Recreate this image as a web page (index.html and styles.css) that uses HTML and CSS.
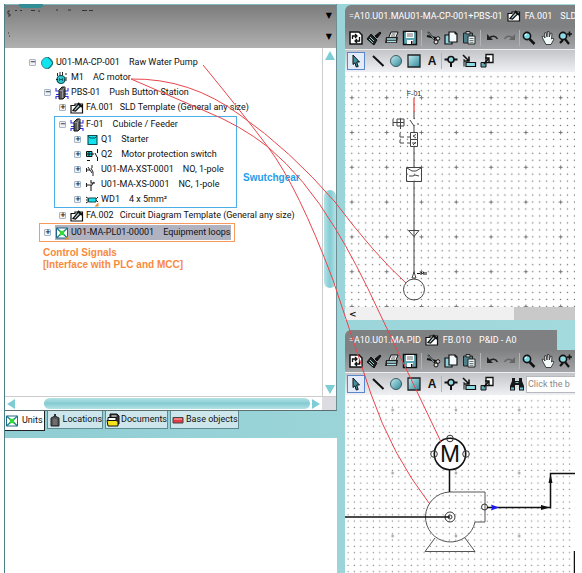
FILE: index.html
```html
<!DOCTYPE html>
<html lang="en">
<head>
<meta charset="utf-8">
<title>Units</title>
<link rel="stylesheet" href="styles.css">
</head>
<body>
<svg class="sprite" aria-hidden="true">
  <defs>
    <linearGradient id="teal" x1="0" y1="0" x2="1" y2="1"><stop offset="0" stop-color="#c4eef3"/><stop offset="1" stop-color="#2d8797"/></linearGradient>
    <symbol id="i-refresh" viewBox="0 0 16 16"><path d="M2 2h9l3 3v9H2z" fill="#fff" stroke="#111" stroke-width="1.5"/><path d="M4.500 9V6h4M7 4l2 2-2 2M11.500 7v4h-4M9 9l-2 2 2 2" fill="none" stroke="#111" stroke-width="1.300"/></symbol>
    <symbol id="i-brush" viewBox="0 0 16 16"><path d="M9 6l5-4 1 1-4 5z" fill="#111" stroke="#111"/><path d="M5 4l6 6-3 5-7-6z" fill="#222" stroke="#111"/><path d="M4 7l4 4M3 9l4 4" stroke="#8cd0da"/></symbol>
    <symbol id="i-print" viewBox="0 0 16 16"><path d="M5 7l2-5h7l-2 5" fill="#fff" stroke="#111"/><path d="M2 7h12l-1 6H1z" fill="#222"/><path d="M3 9h9M3 11.500h9" stroke="#a6dfe6" stroke-width="1.500"/><path d="M7.500 4h4M7 6h4" stroke="#111" stroke-width=".7"/></symbol>
    <symbol id="i-save" viewBox="0 0 16 16"><path d="M1.500 1.500h13v13h-13z" fill="#5aa6b2" stroke="#111" stroke-width="1.400"/><path d="M4 2h8v6H4zM5 10h6v4H5z" fill="#fff"/><path d="M5 4h6M5 6h6" stroke="#444" stroke-width=".8"/><path d="M9 11h1.500v3H9z" fill="#111"/></symbol>
    <symbol id="i-cut" viewBox="0 0 16 16"><path d="M3 2l7 8M2 6l9 2" stroke="#111" stroke-width="1.800"/><path d="M3.300 2.500L9 9" stroke="#cfeef2" stroke-width=".7"/><circle cx="13" cy="8.500" r="1.800" fill="#ddd" stroke="#111"/><circle cx="11" cy="12" r="2" fill="#ddd" stroke="#111"/></symbol>
    <symbol id="i-copy" viewBox="0 0 16 16"><path d="M2 5h7v9H2z" fill="#8ed3dd" stroke="#111" stroke-width="1.200"/><path d="M6 2h6l2 2v8H6z" fill="#f4fbfc" stroke="#111" stroke-width="1.200"/><path d="M12 2v2h2" fill="none" stroke="#111"/></symbol>
    <symbol id="i-paste" viewBox="0 0 16 16"><path d="M2.500 3h9v10h-9z" fill="#4c7f88" stroke="#222"/><path d="M5 1.500h4V4H5z" fill="#ccc" stroke="#222"/><path d="M7 6h7v8H7z" fill="#e6f5f7" stroke="#222"/><path d="M8.500 8.500h4M8.500 10.500h4M8.500 12.300h4" stroke="#444" stroke-width=".7"/></symbol>
    <symbol id="i-undo" viewBox="0 0 16 16"><path d="M3 4v6h6z" fill="#222"/><path d="M5 8.500C8 5 12 6 13.500 9" fill="none" stroke="#222" stroke-width="1.500"/></symbol>
    <symbol id="i-redo" viewBox="0 0 16 16"><path d="M13 4v6H7z" fill="#666"/><path d="M11 8.500C8 5 4 6 2.500 9" fill="none" stroke="#666" stroke-width="1.500"/></symbol>
    <symbol id="i-zoom" viewBox="0 0 16 16"><path d="M8.500 9l5 5" stroke="#111" stroke-width="2.500"/><circle cx="6" cy="6" r="3.600" fill="#7cd8e4" stroke="#111" stroke-width="1.600"/><path d="M4 6q0-2 2-2" stroke="#fff" fill="none"/></symbol>
    <symbol id="i-hand" viewBox="0 0 16 16"><path d="M4 9L3 6.500 4.500 6 6 8 5.500 3 7 2.500 8 7l.5-5.500H10l.3 5.500 1.200-4 1.500.5L12.500 9l1.500-1 1 1-3 5.500H7z" fill="#f2fafa" stroke="#222" stroke-width=".8"/></symbol>
    <symbol id="i-zoomx" viewBox="0 0 16 16"><path d="M8 9l4 5M3 13l3-3" stroke="#111" stroke-width="2.200"/><circle cx="6" cy="6" r="3.600" fill="#8edbe6" stroke="#111" stroke-width="1.600"/><path d="M10 4h5M12.500 1.500v5" stroke="#111" stroke-width="1.600"/></symbol>
    <symbol id="i-page" viewBox="0 0 16 16"><path d="M2 1h13v14H2z" fill="#fff" stroke="#111" stroke-width="2"/></symbol>
    <symbol id="i-arrow" viewBox="0 0 16 16"><path d="M5 2l6.500 7H8.700l1.500 4.500-2 .5L7 9.800 5 11.500z" fill="#3d93a0" stroke="#111"/></symbol>
    <symbol id="i-line" viewBox="0 0 16 16"><path d="M3 3l10.500 10" stroke="#111" stroke-width="2"/></symbol>
    <symbol id="i-circle" viewBox="0 0 16 16"><circle cx="8" cy="8" r="5.500" fill="url(#teal)" stroke="#3c5a60"/></symbol>
    <symbol id="i-rect" viewBox="0 0 16 16"><path d="M2 2h12v12H2z" fill="url(#teal)" stroke="#222" stroke-width="1.300"/></symbol>
    <symbol id="i-node" viewBox="0 0 16 16"><path d="M1.500 6.500h13M8 7v7" stroke="#111" stroke-width="2"/><circle cx="8" cy="6.500" r="3" fill="#8fdbe4" stroke="#111" stroke-width="1.600"/></symbol>
    <symbol id="i-insert" viewBox="0 0 16 16"><path d="M2 2l6 6M8 3.500V8H3" stroke="#111" stroke-width="1.600" fill="none"/><path d="M3 6v7.500" stroke="#111"/><path d="M5 9.500h9.500v4H5z" fill="#8fdbe4" stroke="#111" stroke-width="1.200"/></symbol>
    <symbol id="i-move" viewBox="0 0 16 16"><path d="M7 1.500h7v8H7z" fill="#fff" stroke="#111" stroke-width="1.300"/><path d="M2 9.500h5v4.500H2z" fill="#62a9b4" stroke="#111"/><path d="M5 11l5-6M10 9V5H6" stroke="#111" stroke-width="1.400" fill="none"/></symbol>
    <symbol id="i-find" viewBox="0 0 16 16"><path d="M3 2h3v3h4V2h3v3l2 5v4.500h-5V9H6v5.500H1V10l2-5z" fill="#14181a"/><path d="M2 11.500h3v2H2zM11 11.500h3v2h-3z" fill="#67c3cf"/><path d="M6.500 6.500h3" stroke="#67c3cf"/></symbol>
    <symbol id="i-doc" viewBox="0 0 14 12"><path d="M1 3.500h4V2h7.500v9H1z" fill="#fff" stroke="#111" stroke-width="1.200"/><path d="M3 8.500l5-6 3 1-5.500 5.500z" fill="#b7d5d8" stroke="#111" stroke-width="1.200"/><path d="M8 1l4 4" stroke="#111" stroke-width="1.800"/></symbol>
    <symbol id="i-pump" viewBox="0 0 14 14"><circle cx="7" cy="7" r="5.500" fill="#10e4ee" stroke="#2d8d98"/><path d="M8 1l5 6-5 6" fill="none" stroke="#17484e" stroke-width=".8"/></symbol>
    <symbol id="i-motor" viewBox="0 0 14 14"><circle cx="6" cy="8.500" r="4" fill="#2fc8d0" stroke="#0b555e" stroke-width="1.200"/><path d="M2.500 2v3M5 1v3.500M7.500 1v3.500M1 8.500h2M11 2v2M11 6v2M9 9h3" stroke="#222"/><path d="M4.500 10V7.500L6 9l1.500-1.500V10" fill="none" stroke="#064a50" stroke-width=".8"/></symbol>
    <symbol id="i-cab" viewBox="0 0 14 14"><path d="M1 2v3h3M1 8.500h3M4 10.500H1v2.500M13 2v3h-3M13 8h-3M10 10.500h3v2.500" fill="none" stroke="#3232e6" stroke-width="1.100"/><path d="M4 4l3-3h3v10l-2 2H4z" fill="#5c5c5c" stroke="#111"/><path d="M4.500 4.500h3V12M7.500 4.500l2-3" stroke="#aaa" stroke-width=".8" fill="none"/></symbol>
    <symbol id="i-starter" viewBox="0 0 14 14"><path d="M3 2.500h9v9H3z" fill="#10e4ee" stroke="#0e4b52" stroke-width="1.100"/><path d="M3 3l2 2h5l2-2" fill="none" stroke="#0e4b52"/></symbol>
    <symbol id="i-mps" viewBox="0 0 14 14"><path d="M1.500 3.500h5.500v5H1.500z" fill="#10e4ee" stroke="#111"/><path d="M4 3.500v5M1.500 6H9M2 12.500h3M12.500 1v4M12.500 9v4M12 9L10 5" stroke="#111"/></symbol>
    <symbol id="i-no" viewBox="0 0 14 14"><path d="M1.500 5v4M1.500 7H5M3 4l4 6M7 2v3M8 13V9L6 5" fill="none" stroke="#222"/></symbol>
    <symbol id="i-nc" viewBox="0 0 14 14"><path d="M1.500 5v4M1.500 7H6M6 2v3h4M6 13V8l3-4" fill="none" stroke="#222" stroke-width="1.100"/></symbol>
    <symbol id="i-cable" viewBox="0 0 14 14"><path d="M1 4l3 2M1 10l3-2M1 7h3M13 4l-2 2M13 9l-2-2" stroke="#111"/><path d="M3.500 5h7.500v4H3.500z" fill="#10e4ee" stroke="#14474d"/><path d="M9.500 13.500l4 0v-4z" fill="#f08a20"/></symbol>
    <symbol id="i-unit" viewBox="0 0 14 14"><path d="M1.500 2h11v10h-11z" fill="#fff" stroke="#268" /><path d="M1.500 2l11 10M12.500 2l-11 10" stroke="#1a7f8d" stroke-width="1.300"/><path d="M5 5l4 4M9 5L5 9" stroke="#2fdc2f" stroke-width="2.400"/></symbol>
    <symbol id="i-loop" viewBox="0 0 14 14"><use href="#i-unit"/><path d="M9.500 13.500h4v-4z" fill="#f08a20"/></symbol>
    <symbol id="i-loc" viewBox="0 0 14 14"><path d="M3 5l4-2 4 2v8H3z" fill="#555" stroke="#222"/><path d="M6 1h2v3H6z" fill="#333"/><path d="M5 7h4M5 9h4M5 11h4" stroke="#888"/></symbol>
    <symbol id="i-docs" viewBox="0 0 14 14"><path d="M4 1h7l2 2v8H4z" fill="#333" stroke="#111"/><path d="M5.500 3h5" stroke="#fff"/><path d="M2 4.500h8v3H2z" fill="#fff" stroke="#111"/><path d="M1 7.500h9l2 1v4.500H2z" fill="#f6e11c" stroke="#111"/></symbol>
    <symbol id="i-base" viewBox="0 0 14 14"><path d="M2 4.500h10v5.500H2z" fill="#e33c44" stroke="#444"/><path d="M3 6h8" stroke="#ffb9b9"/></symbol>
  </defs>
</svg>

<div class="app">
  <section class="side">
    <div class="explorer">
      <header class="side-head">
        <span class="logo-arc"></span>
        <svg class="mark" width="92" height="34" aria-hidden="true"><path d="M3 3H1v3h2v2H1M1 25h1M2 28h1M8 2.500h2M13 2.500h2M24 2.500h4M31 3h2M49 2h2M61 2h3M75 2.500h5M82 2.500h4" stroke="#333" fill="none"/></svg>
        <div class="drops"><button aria-label="Project list">▼</button><button aria-label="View list">▼</button></div>
      </header>
      <div class="body">
        <div class="tree-pane">
          <ul class="tree">
            <li class="row l1"><button class="ex">−</button><svg class="ic"><use href="#i-pump"/></svg><span>U01-MA-CP-001</span><span>Raw Water Pump</span></li>
            <li class="row l2 leaf"><svg class="ic"><use href="#i-motor"/></svg><span>M1</span><span>AC motor</span></li>
            <li class="row l2"><button class="ex">−</button><svg class="ic"><use href="#i-cab"/></svg><span>PBS-01</span><span>Push Button Station</span></li>
            <li class="row l3"><button class="ex">+</button><svg class="ic"><use href="#i-doc"/></svg><span>FA.001</span><span class="near">SLD Template (General any size)</span></li>
            <li class="group">
              <ul>
                <li class="row"><button class="ex">−</button><svg class="ic"><use href="#i-cab"/></svg><span>F-01</span><span>Cubicle / Feeder</span></li>
                <li class="row in"><button class="ex">+</button><svg class="ic"><use href="#i-starter"/></svg><span>Q1</span><span>Starter</span></li>
                <li class="row in"><button class="ex">+</button><svg class="ic"><use href="#i-mps"/></svg><span>Q2</span><span>Motor protection switch</span></li>
                <li class="row in"><button class="ex">+</button><svg class="ic"><use href="#i-no"/></svg><span>U01-MA-XST-0001</span><span>NO, 1-pole</span></li>
                <li class="row in"><button class="ex">+</button><svg class="ic"><use href="#i-nc"/></svg><span>U01-MA-XS-0001</span><span>NC, 1-pole</span></li>
                <li class="row in"><button class="ex">+</button><svg class="ic"><use href="#i-cable"/></svg><span>WD1</span><span>4 x 5mm²</span></li>
              </ul>
              <strong class="note-blue">Swutchgear</strong>
            </li>
            <li class="row l3"><button class="ex">+</button><svg class="ic"><use href="#i-doc"/></svg><span>FA.002</span><span class="near">Circuit Diagram Template (General any size)</span></li>
            <li class="row loops"><button class="ex">+</button><div class="sel"><svg class="ic"><use href="#i-loop"/></svg><span>U01-MA-PL01-00001</span><span>Equipment loops</span></div></li>
          </ul>
          <p class="note-orange">Control Signals<br>[Interface with PLC and MCC]</p>
        </div>
        <div class="vbar"><i class="up"></i><i class="vthumb"></i><i class="down"></i></div>
      </div>
      <div class="hbar"><i class="left"></i><i class="hthumb"></i><i class="right"></i><i class="corner"></i></div>
    </div>
    <nav class="tabs">
      <button class="on"><svg class="ic"><use href="#i-unit"/></svg>Units</button>
      <button><svg class="ic"><use href="#i-loc"/></svg>Locations</button>
      <button><svg class="ic"><use href="#i-docs"/></svg>Documents</button>
      <button><svg class="ic"><use href="#i-base"/></svg>Base objects</button>
    </nav>
    <div class="blank"></div>
  </section>

  <main class="docs">
    <section class="doc first">
      <h2 class="title"><span>=A10.U01.MAU01-MA-CP-001+PBS-01</span><svg class="ic"><use href="#i-doc"/></svg><span>FA.001</span><span class="far">SLD</span></h2>
      <div class="bar">
        <button aria-label="Refresh"><svg><use href="#i-refresh"/></svg></button><button aria-label="Format"><svg><use href="#i-brush"/></svg></button><button aria-label="Print"><svg><use href="#i-print"/></svg></button><button aria-label="Save"><svg><use href="#i-save"/></svg></button><i></i><button aria-label="Cut"><svg><use href="#i-cut"/></svg></button><button aria-label="Copy"><svg><use href="#i-copy"/></svg></button><button aria-label="Paste"><svg><use href="#i-paste"/></svg></button><i></i><button aria-label="Undo"><svg><use href="#i-undo"/></svg></button><button aria-label="Redo"><svg><use href="#i-redo"/></svg></button><i class="thin"></i><button aria-label="Zoom"><svg><use href="#i-zoom"/></svg></button><button aria-label="Pan"><svg><use href="#i-hand"/></svg></button><button aria-label="Zoom in"><svg><use href="#i-zoomx"/></svg></button><button aria-label="Page"><svg><use href="#i-page"/></svg></button>
      </div>
      <div class="bar tools">
        <button class="on" aria-label="Select"><svg><use href="#i-arrow"/></svg></button><i class="sp"></i><button aria-label="Line"><svg><use href="#i-line"/></svg></button><button aria-label="Circle"><svg><use href="#i-circle"/></svg></button><button aria-label="Rectangle"><svg><use href="#i-rect"/></svg></button><button class="a">A</button><i class="thin"></i><button aria-label="Node"><svg><use href="#i-node"/></svg></button><button aria-label="Insert"><svg><use href="#i-insert"/></svg></button><button aria-label="Move"><svg><use href="#i-move"/></svg></button>
      </div>
      <svg class="canvas sld" role="img" aria-label="Single line diagram">
        <defs>
          <pattern id="g1" x="3.300" y="1.300" width="6.960" height="6.960" patternUnits="userSpaceOnUse"><path d="M2.800 2.800h1.300v1.300h-1.300z" fill="#777"/></pattern>
          <pattern id="g2" x="24.300" y="8.300" width="34.800" height="34.800" patternUnits="userSpaceOnUse"><path d="M15.400 17.400h4M17.400 15.400v4" stroke="#777"/></pattern>
        </defs>
        <rect width="100%" height="100%" fill="url(#g1)"/><rect width="100%" height="100%" fill="url(#g2)"/>
        <text class="tiny" x="69" y="24" text-anchor="middle">F-01</text>
        <path d="M69 26v14" stroke="#f04848" stroke-width="1.300"/>
        <g fill="none" stroke="#444">
          <path d="M69 40v7M65 48l4 6v7M48 47v7M48 50.500h4M52 47h7v7h-7zM52 50.500h7M55.500 47v10M73 51v2M55 61v4h4M62 65h3M55 68v3h4M62 71h3"/>
          <path d="M65.500 60.500h7v7h-7zM65.500 67.500h7v7h-7zM71 62.500l-3 1.500 3 2M67 71h4M68 73l3-3"/>
          <path d="M69 75v20M61.500 95.500h15v14h-15zM62 96l5 3h4l5-3M64 104h4l2-1 4 1M69 110v92M63.500 158.500h10.500l-5 6zM69 200l-2 6h4z"/>
          <circle cx="69" cy="217.500" r="10.500"/>
        </g>
        <path d="M72 201.500h3M76 203v-3l1.500 2 1.500-2v3M81 200v3" stroke="#111" fill="none"/>
      </svg>
      <div class="hscroll"><span>&lt;</span><i></i></div>
    </section>

    <section class="doc second">
      <h2 class="title short"><span>=A10.U01.MA.PID</span><svg class="ic"><use href="#i-doc"/></svg><span>FB.010</span><span class="far">P&amp;ID - A0</span></h2>
      <div class="bar">
        <button aria-label="Refresh"><svg><use href="#i-refresh"/></svg></button><button aria-label="Format"><svg><use href="#i-brush"/></svg></button><button aria-label="Print"><svg><use href="#i-print"/></svg></button><button aria-label="Save"><svg><use href="#i-save"/></svg></button><i></i><button aria-label="Cut"><svg><use href="#i-cut"/></svg></button><button aria-label="Copy"><svg><use href="#i-copy"/></svg></button><button aria-label="Paste"><svg><use href="#i-paste"/></svg></button><i></i><button aria-label="Undo"><svg><use href="#i-undo"/></svg></button><button aria-label="Redo"><svg><use href="#i-redo"/></svg></button><i class="thin"></i><button aria-label="Zoom"><svg><use href="#i-zoom"/></svg></button><button aria-label="Pan"><svg><use href="#i-hand"/></svg></button><button aria-label="Zoom in"><svg><use href="#i-zoomx"/></svg></button><button aria-label="Page"><svg><use href="#i-page"/></svg></button>
      </div>
      <div class="bar tools">
        <button class="on" aria-label="Select"><svg><use href="#i-arrow"/></svg></button><i class="sp"></i><button aria-label="Line"><svg><use href="#i-line"/></svg></button><button aria-label="Circle"><svg><use href="#i-circle"/></svg></button><button aria-label="Rectangle"><svg><use href="#i-rect"/></svg></button><button class="a">A</button><i class="thin"></i><button aria-label="Node"><svg><use href="#i-node"/></svg></button><button aria-label="Insert"><svg><use href="#i-insert"/></svg></button><button aria-label="Move"><svg><use href="#i-move"/></svg></button><i class="gap"></i><button aria-label="Find"><svg><use href="#i-find"/></svg></button><input aria-label="Search" value="Click the b">
      </div>
      <svg class="canvas pid" role="img" aria-label="Process diagram">
        <defs>
          <pattern id="g3" x="0" y="2.700" width="6.330" height="6.330" patternUnits="userSpaceOnUse"><path d="M2.500 2.500h1.200v1.200h-1.200z" fill="#888"/></pattern>
          <pattern id="g4" x="16" y="-16.500" width="63.300" height="63" patternUnits="userSpaceOnUse"><circle cx="31.600" cy="31.500" r="1.300" fill="#999"/></pattern>
        </defs>
        <rect width="100%" height="100%" fill="url(#g3)"/><rect width="100%" height="100%" fill="url(#g4)"/>
        <path d="M104.500 97H140v30H130A25 25 0 1 1 104.500 97zM90 143l-10 13.500h50L120 143" fill="none" stroke="#555"/>
        <circle cx="105" cy="59" r="15.700" fill="#fff" stroke="#111" stroke-width="1.600"/>
        <g fill="none" stroke="#333"><circle cx="105" cy="43.500" r="3.300"/><circle cx="89" cy="59" r="3.300"/><circle cx="121" cy="59" r="3.300"/><circle cx="105" cy="122" r="2"/><circle cx="105" cy="122" r="5"/><circle cx="139.500" cy="112" r="3"/></g>
        <text class="em" x="105" y="67" text-anchor="middle">M</text>
        <path d="M104.500 75v22M0 122h105M142 112.500h63.500V78.500H900M229.500 156v60" fill="none" stroke="#111" stroke-width="1.500"/>
        <path d="M196 110l9 2.500-9 2.500zM203.500 88l2-9 2 9z" fill="#111"/>
        <path d="M146 109.500l8 3-8 3 1-3z" fill="#1919f0"/>
      </svg>
    </section>
  </main>

  <svg class="links" aria-hidden="true">
    <path d="M203 65Q240 110 268 147Q298 187 333 280L371 394Q392 455 429 503"/>
    <path d="M131 79Q190 78 240 115Q290 150 335 202Q375 255 406 283"/>
    <path d="M131 79L205 111Q240 125 268 147Q305 178 335 228Q355 260 380 314L441 442"/>
  </svg>
</div>
</body>
</html>
```
FILE: styles.css
```css
* { box-sizing: border-box; }
body {
  margin: 0;
  padding: 4px 7px 0 4px;
  min-height: 100vh;
  display: flex;
  background: #fff;
  color: #111;
  font: 9px/15px Roboto, "Liberation Sans", sans-serif;
  overflow: hidden;
}
ul, p, h2 { margin: 0; padding: 0; list-style: none; }
button, input { font: inherit; color: inherit; border: 0; padding: 0; background: none; }
.sprite { position: absolute; width: 0; height: 0; }
.ic { width: 14px; height: 14px; flex: none; }
.app {
  flex: 1;
  min-width: 0;
  display: grid;
  grid-template-columns: 333px minmax(0, 1fr);
  column-gap: 8px;
  background: linear-gradient(90deg, #8fcdd3, #a3dade);
}
.links { position: absolute; left: 0; top: 0; width: 100%; height: 100%; pointer-events: none; }
.links path { fill: none; stroke: #e8464c; stroke-width: 1; }

/* explorer */
.side { display: flex; flex-direction: column; border-left: 1px solid #4d7f86; min-width: 0; }
.explorer { border-right: 1px solid #6f8f94; border-bottom: 1px solid #5b6f73; background: #fff; }
.side-head {
  display: flex;
  justify-content: space-between;
  height: 44px;
  padding: 3px 2px 0;
  background: linear-gradient(#7c7c7c, #b0b0b0);
  border-top: 1px solid #7fb9be;
  position: relative;
}
.logo-arc { position: absolute; left: 14px; top: -1px; width: 24px; height: 4px; background: #2f8f94; border-radius: 0 0 12px 12px; }
.drops { display: flex; flex-direction: column; gap: 6px; }
.drops button { font: 8px/15px "DejaVu Sans", sans-serif; color: #000; padding-right: 2px; }
.body { display: flex; height: 348px; }
.tree-pane { flex: 1; min-width: 0; padding-top: 7px; }
.vbar { width: 14px; display: flex; flex-direction: column; align-items: center; border-left: 1px solid #ccc; padding: 3px 0 2px; }
.up, .down { border: 5px solid transparent; }
.up { border-bottom: 9px solid #7fcdd4; border-top: 0; }
.down { border-top: 9px solid #7fcdd4; border-bottom: 0; }
.vthumb { width: 12px; height: 98px; margin: auto 0 97px; border-radius: 6px; background: linear-gradient(90deg, #b4e2e6, #84ccd3 50%, #b4e2e6); }
.hbar { display: flex; align-items: center; height: 14px; border-top: 1px solid #ccc; padding-left: 2px; }
.left, .right { border: 5px solid transparent; }
.left { border-right: 8px solid #7fcdd4; border-left: 0; }
.right { border-left: 8px solid #7fcdd4; border-right: 0; margin: 0 2px; }
.hthumb { flex: 1; height: 11px; margin-left: 29px; border-radius: 6px; background: linear-gradient(#b4e2e6, #84ccd3 50%, #b4e2e6); }
.corner { width: 14px; height: 13px; background: #dcdce2; }

.row { display: flex; align-items: center; height: 15px; white-space: nowrap; }
.row .ic + span { margin: 0 9px 0 2px; }
.row .ic + span:has(+ .near) { margin-right: 6px; }
.ex {
  width: 7px; height: 7px; margin-right: 4px; flex: none;
  border: 1px solid #a9b6c6; border-radius: 1px;
  background: #eef1f5; color: #111;
  font: bold 7px/5px "DejaVu Sans", sans-serif;
}
.l1 { padding-left: 24px; }
.l2 { padding-left: 39px; }
.l2.leaf { padding-left: 50px; }
.l3 { padding-left: 54px; }
.group { position: relative; width: 183px; margin: 1px 0 0 49px; border: 1px solid #4bb0e8; padding-left: 4px; }
.in { padding-left: 15px; }
.note-blue { position: absolute; left: 188px; top: 53px; font: bold 10px/15px "Liberation Sans", sans-serif; color: #1ca0ea; }
.loops { width: 196px; height: 19px; margin-left: 34px; padding-left: 4px; border: 1px solid #f79a5c; }
.sel { display: flex; align-items: center; height: 15px; padding-right: 1px; background: #b1b2c0; }
.note-orange { margin: 5px 0 0 38px; font: bold 10px/12px "Liberation Sans", sans-serif; color: #f88a3e; }

.tabs { display: flex; align-items: flex-start; gap: 2px; height: 27px; }
.tabs button {
  display: flex; align-items: center; gap: 1px; height: 18px;
  white-space: nowrap; background: #cde6ec; border: 1px solid #5f8b93; border-top: 0;
}
.tabs .on { height: 20px; gap: 3px; padding-right: 1px; background: #fff; border-color: #222; border-left: 0; }
.blank { flex: 1; background: #fff; }

/* documents */
.docs { display: flex; flex-direction: column; min-width: 0; padding-top: 1px; }
.doc { display: flex; flex-direction: column; min-width: 0; }
.second { flex: 1; margin-top: 10px; }
.title {
  display: flex; align-items: center; gap: 4px; height: 22px; padding-left: 4px;
  overflow: hidden; white-space: nowrap;
  background: #7f8082; color: #fff; border-top-left-radius: 6px;
  font-size: 9px; font-weight: 400;
}
.far { margin-left: 4px; }
.short { height: 20px; width: 92%; }
.bar { display: flex; align-items: center; height: 22px; padding-left: 2px; overflow: hidden; background: linear-gradient(#7f8082, #a4a5a8); }
.bar button { width: 18px; height: 18px; flex: none; display: grid; place-items: center; }
.bar svg { width: 16px; height: 16px; }
.bar i { flex: none; width: 1px; height: 16px; margin: 0 2px; background: #b4b4b6; }
.bar .thin { margin: 0; }
.bar .sp, .bar .gap { background: none; width: 0; }
.bar .gap { width: 12px; margin: 0; }
.tools { height: 23px; background: linear-gradient(#c3c5c9, #eef0f4); border-top: 1px solid #eee; }
.tools .on { border: 1px solid #5a86cc; background: #e3ebf8; }
.tools .a { font: bold 12px/18px "Liberation Sans", sans-serif; color: #111; }
.tools input { flex: 1; min-width: 0; height: 17px; padding: 0 0 0 1px; border: 1px solid #b5b8bd; border-right: 0; background: #fff; color: #888; }
.canvas { display: block; width: 100%; background: #fff; }
.sld { height: 235px; }
.pid { flex: 1; height: 178px; }
.tiny { font: 7px "Liberation Sans", sans-serif; fill: #222; }
.em { font: 24px "Liberation Sans", sans-serif; fill: #111; }
.hscroll { display: flex; align-items: center; justify-content: space-between; height: 13px; padding-left: 4px; background: #f0f0f0; font: bold 9px/12px "DejaVu Sans", sans-serif; }
.hscroll i { width: 27%; height: 13px; background: #c9c9c9; }
```
